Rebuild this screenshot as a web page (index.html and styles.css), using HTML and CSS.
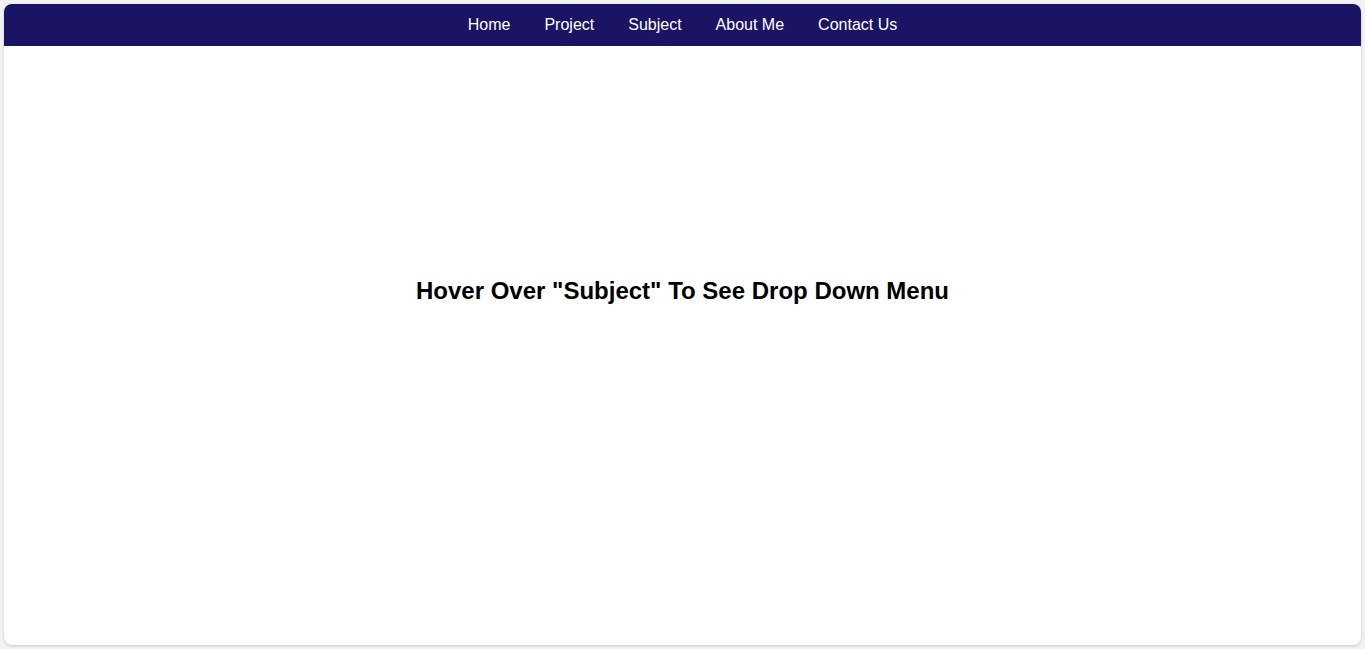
FILE: index.html
```html
<!DOCTYPE html>
<html>
<head>
<meta charset="utf-8">
<link rel="stylesheet" href="styles.css">
</head>
<body>
<div class="card">
  <nav class="nav">
    <a href="#">Home</a>
    <a href="#">Project</a>
    <a href="#">Subject</a>
    <a href="#">About Me</a>
    <a href="#">Contact Us</a>
  </nav>
  <main class="content">
    <h1 class="title">Hover Over "Subject" To See Drop Down Menu</h1>
  </main>
</div>
</body>
</html>
```

FILE: styles.css
```css
html, body {
  margin: 0;
  padding: 0;
  height: 100%;
}
body {
  background: #f2f2f2;
  padding: 4px;
  box-sizing: border-box;
  font-family: "Liberation Sans", Arial, sans-serif;
}
.card {
  height: 641px;
  background: #fff;
  border-radius: 8px;
  box-shadow: 0 1px 3px rgba(0,0,0,0.18);
  overflow: hidden;
  display: flex;
  flex-direction: column;
}
.nav {
  height: 42px;
  background: #1b1464;
  display: flex;
  justify-content: center;
  align-items: center;
  gap: 0;
}
.nav a {
  color: #fff;
  text-decoration: none;
  font-size: 16px;
  padding: 0 17px;
}
.content {
  flex: 1;
  padding-top: 231px;
}
.title {
  margin: 0;
  text-align: center;
  font-size: 24px;
  line-height: 28px;
  font-weight: bold;
  color: #000;
}
```
